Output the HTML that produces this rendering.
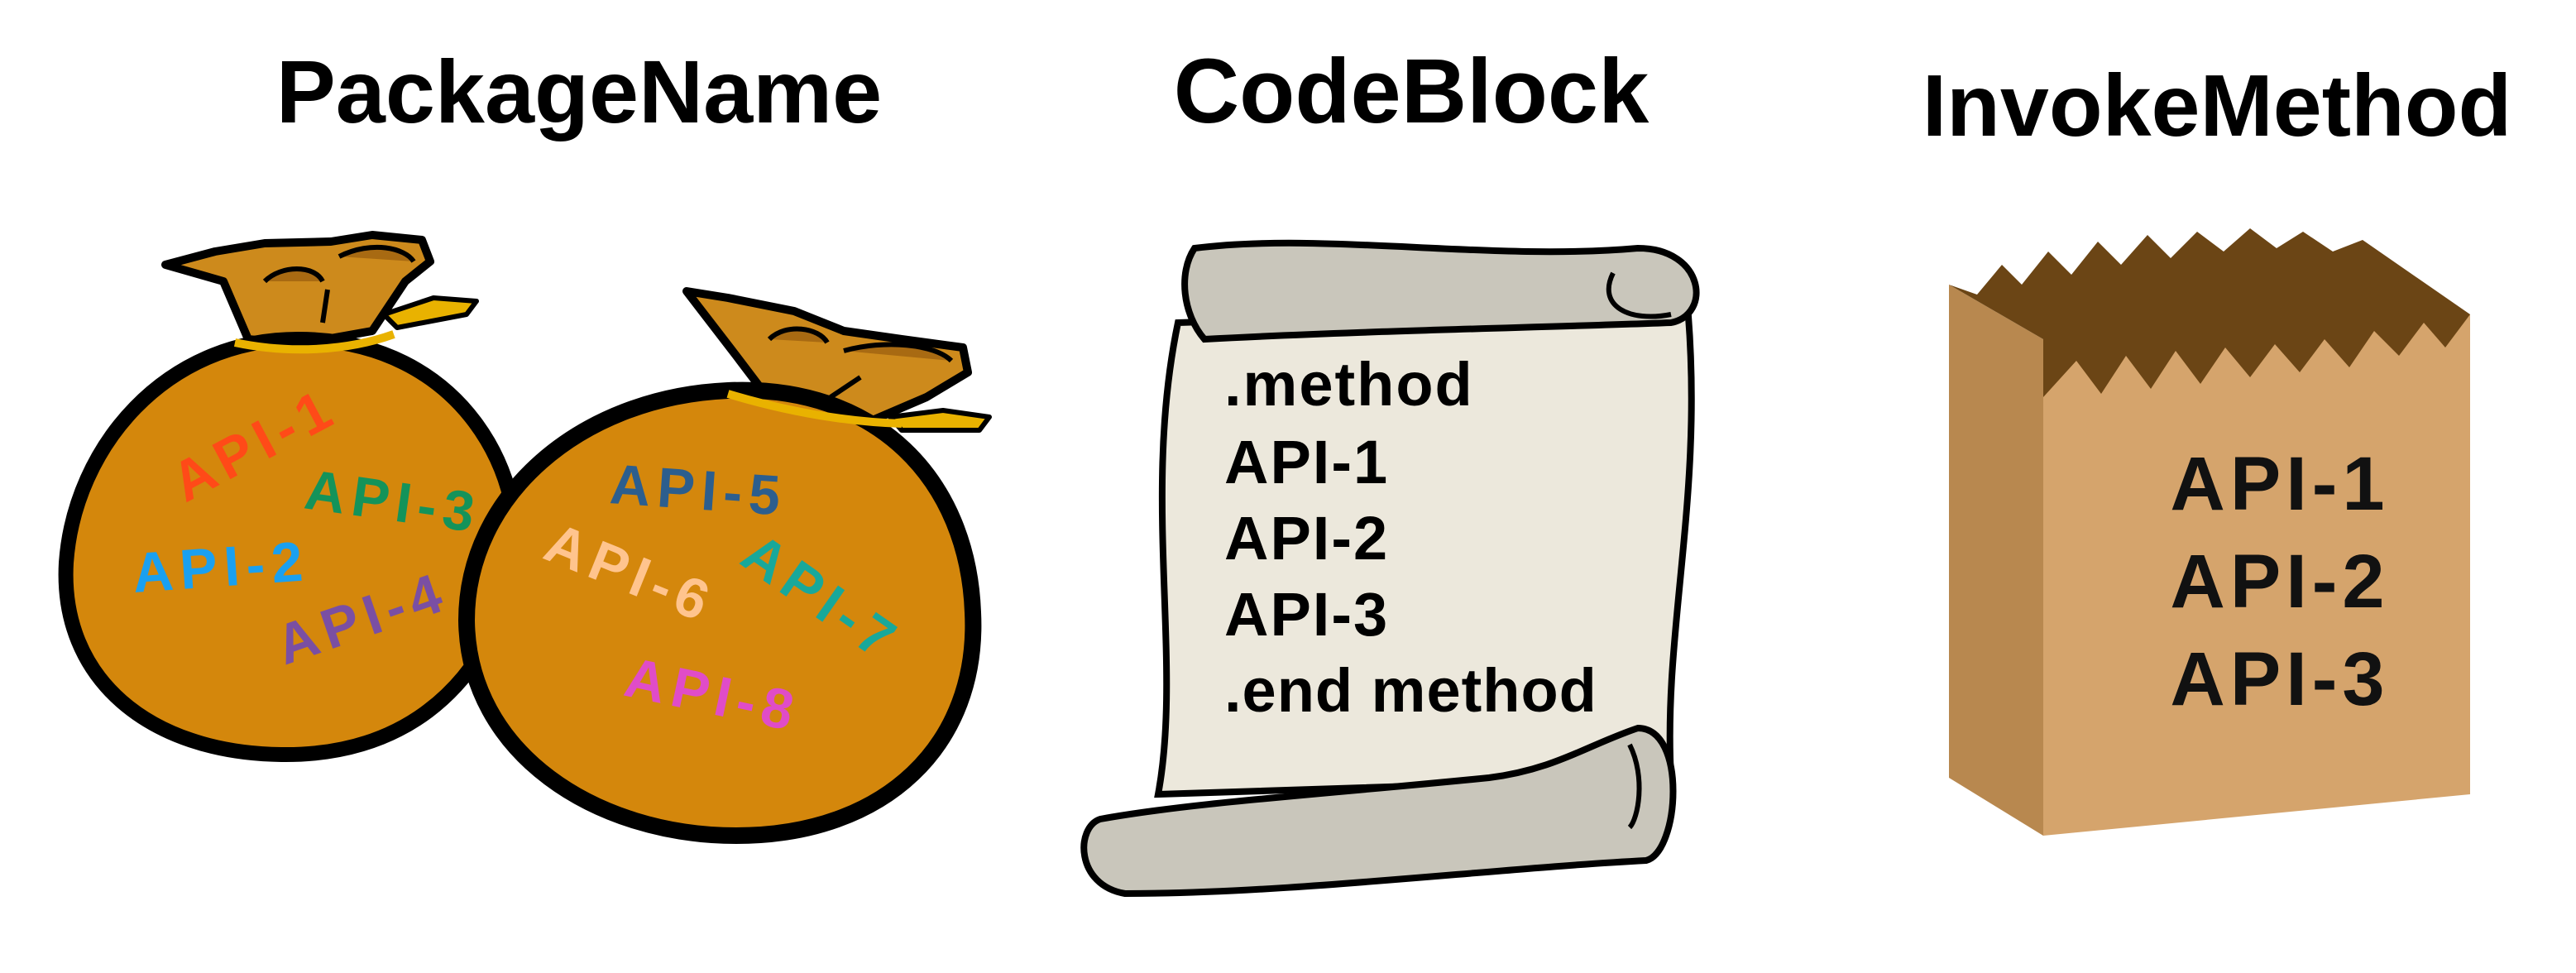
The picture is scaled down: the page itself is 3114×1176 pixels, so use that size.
<!DOCTYPE html>
<html><head><meta charset="utf-8"><style>
html,body{margin:0;padding:0;background:#fff;}
svg{display:block}
text{font-family:"Liberation Sans",sans-serif;font-weight:bold;}
</style></head><body>
<svg width="3114" height="1176" viewBox="0 0 1557 588" xmlns="http://www.w3.org/2000/svg">
<rect width="1557" height="588" fill="#fff"/>
<!-- titles -->
<text x="350" y="74" font-size="54" text-anchor="middle">PackageName</text>
<text x="853" y="74" font-size="55" text-anchor="middle">CodeBlock</text>
<text x="1340" y="82" font-size="53" text-anchor="middle">InvokeMethod</text>

<!-- bag 1 -->
<g stroke="#000" stroke-width="5" stroke-linejoin="round">
<path d="M100 160 L130 152 L160 147 L200 146 L225 142 L255 145 L260 158 L245 170 L225 200 L180 208 L150 205 L135 170 Z" fill="#cd8a1c"/>
<path d="M160 170 C170 160 190 160 195 170 M205 155 C225 145 245 150 250 158" fill="#a86a12" stroke-width="3"/>
<path d="M198 175 L195 195" fill="none" stroke-width="3"/>
<path d="M232 190 L262 180 L288 182 L282 190 L240 198 Z" fill="#e9b200" stroke-width="3"/>
</g>
<path d="M180 205 C100 205 45 270 40 340 C36 410 90 455 170 456 C240 457 290 420 310 350 C322 290 280 205 180 205 Z" fill="#d4870c" stroke="#000" stroke-width="9"/>
<path d="M142 207 C175 214 210 212 238 202" fill="none" stroke="#e9b200" stroke-width="5"/>

<g letter-spacing="4">
<text x="112" y="304" font-size="34" fill="#ff4a18" transform="rotate(-28 112 304)">API-1</text>
<text x="183" y="307" font-size="34" fill="#14935a" transform="rotate(8 183 307)">API-3</text>
<text x="81" y="358" font-size="34" fill="#1aa0f0" transform="rotate(-4 81 358)">API-2</text>
<text x="172" y="402" font-size="34" fill="#7a4fa3" transform="rotate(-19 172 402)">API-4</text>
</g>

<!-- bag 2 -->
<g stroke="#000" stroke-width="5" stroke-linejoin="round">
<path d="M415 176 L440 180 L480 188 L510 200 L545 205 L582 210 L585 225 L560 240 L525 255 L470 248 L445 215 Z" fill="#cd8a1c"/>
<path d="M465 205 C475 195 495 198 500 207 M510 212 C535 205 565 208 575 218" fill="#a86a12" stroke-width="3"/>
<path d="M520 228 L502 240" fill="none" stroke-width="3"/>
<path d="M538 252 L570 248 L598 252 L592 260 L545 260 Z" fill="#e9b200" stroke-width="3"/>
</g>
<path d="M440 236 C350 240 282 300 282 375 C283 455 360 505 445 505 C535 505 592 450 588 370 C585 290 530 232 440 236 Z" fill="#d4870c" stroke="#000" stroke-width="10"/>
<path d="M440 238 C480 250 515 255 545 256" fill="none" stroke="#e9b200" stroke-width="5"/>

<g letter-spacing="4">
<text x="368" y="304" font-size="34" fill="#2c5e8e" transform="rotate(4 368 304)">API-5</text>
<text x="327" y="337" font-size="34" fill="#ffc48e" transform="rotate(22 327 337)">API-6</text>
<text x="446" y="340" font-size="34" fill="#18a89a" transform="rotate(35 446 340)">API-7</text>
<text x="376" y="420" font-size="34" fill="#e04cc8" transform="rotate(12 376 420)">API-8</text>
</g>

<!-- scroll -->
<path d="M712 195 L1020 185 C1030 300 1005 380 1010 470 L700 480 C715 400 690 300 712 195 Z" fill="#ece8dc" stroke="#000" stroke-width="4"/>
<path d="M722 150 C800 140 900 158 990 150 C1030 150 1035 190 1010 195 C930 198 820 200 728 205 C715 190 712 165 722 150 Z" fill="#c9c6bb" stroke="#000" stroke-width="4"/>
<path d="M975 165 C965 185 985 195 1010 190" fill="none" stroke="#000" stroke-width="3"/>
<path d="M665 495 C720 485 800 480 900 470 C940 465 960 450 990 440 C1020 440 1015 515 995 520 C900 525 780 540 680 540 C650 535 650 500 665 495 Z" fill="#c9c6bb" stroke="#000" stroke-width="4"/>
<path d="M985 450 C995 470 990 495 985 500" fill="none" stroke="#000" stroke-width="3"/>
<g font-size="37" fill="#000" letter-spacing="1">
<text x="740" y="245">.method</text>
<text x="740" y="292">API-1</text>
<text x="740" y="338">API-2</text>
<text x="740" y="384">API-3</text>
<text x="740" y="430" letter-spacing="0.5">.end method</text>
</g>

<!-- paper bag -->
<path d="M1178 172 L1235 205 L1235 505 L1178 470 Z" fill="#b8884f"/>
<path d="M1235 205 L1493 190 L1493 480 L1235 505 Z" fill="#d5a46c"/>
<path d="M1178 172 L1195 178 L1210 160 L1222 172 L1238 152 L1252 166 L1268 146 L1282 160 L1298 142 L1312 156 L1328 140 L1344 152 L1360 138 L1376 150 L1392 140 L1410 152 L1428 145 L1493 190 L1478 210 L1465 195 L1450 215 L1435 200 L1420 222 L1405 205 L1390 225 L1375 208 L1360 228 L1345 210 L1330 232 L1315 212 L1300 235 L1285 215 L1270 238 L1255 218 L1235 240 L1235 205 Z" fill="#6b4515"/>
<g font-size="46" fill="#111" text-anchor="middle" letter-spacing="3">
<text x="1378" y="308">API-1</text>
<text x="1378" y="367">API-2</text>
<text x="1378" y="426">API-3</text>
</g>
</svg>
</body></html>
